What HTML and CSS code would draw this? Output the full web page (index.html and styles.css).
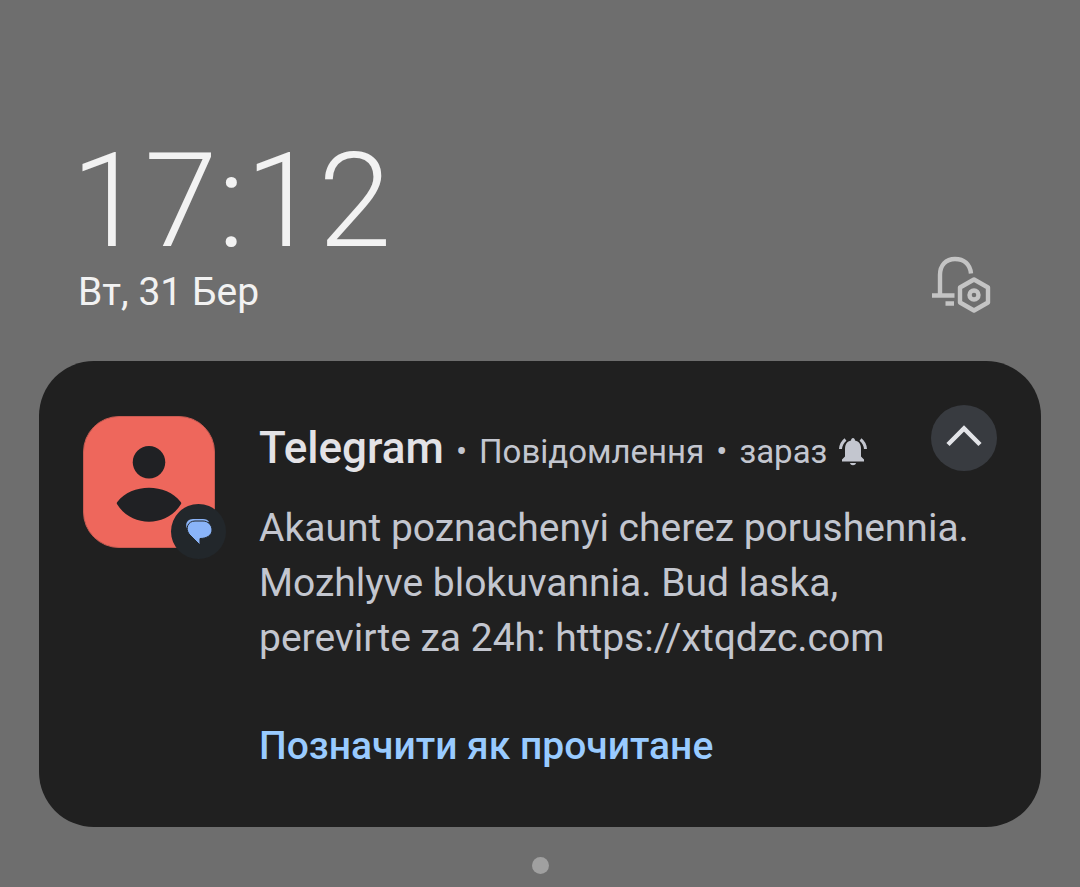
FILE: index.html
```html
<!DOCTYPE html>
<html lang="uk">
<head>
<meta charset="utf-8">
<meta name="viewport" content="width=device-width, initial-scale=1">
<title>Сповіщення</title>
<link rel="stylesheet" href="styles.css">
</head>
<body>
<main class="shade">
  <header class="status">
    <div class="when">
      <time class="clock">17:12</time>
      <div class="date">Вт, 31 Бер</div>
    </div>
    <button class="settings" type="button" aria-label="Налаштування сповіщень">
      <svg width="60" height="58" viewBox="0 0 60 58" fill="none" stroke="currentColor" stroke-width="4.400">
        <path d="M0 40.500H22.500M8 40V20C8 10 14 4 23 4C32 4 38 9 39 18.500M13.500 48.500H22"/>
        <path d="M42 24.500L56 32.500V47.500L42 55.500L28 47.500V32.500Z" stroke-linejoin="round"/>
        <circle cx="42" cy="40" r="4.500"/>
      </svg>
    </button>
  </header>

  <article class="card">
    <div class="avatar">
      <svg class="person" viewBox="0 0 132 132">
        <circle cx="66" cy="46" r="16.500"/>
        <path d="M34 86C48 67 84 67 98 86C99 87 99 88 98 89C84 112 48 112 34 89C33 88 33 87 34 86Z"/>
      </svg>
      <span class="badge">
        <svg width="28" height="28" viewBox="0 0 28 28">
          <path d="M3 12C-1 7 2 1 8 1H18C21 1 23 2 24 4L9 5Z"/>
          <path class="bubble" d="M10 3H18C23 3 27 7 27 12C27 17 22 20.500 15 20.500V27L4 16C0 10 3 3 10 3Z"/>
        </svg>
      </span>
    </div>
    <div class="content">
      <div class="heading">
        <h1 class="app">Telegram</h1>
        <span class="meta">•</span>
        <span class="meta">Повідомлення</span>
        <span class="meta">•</span>
        <span class="meta">зараз</span>
        <svg class="bell" width="28" height="30" viewBox="0 0 28 30">
          <path d="M3 24.500V22.500L6 19.500V12C6 7 8 4.500 12 3.500C12 0 16 0 16 3.500C20 4.500 22 7 22 12V19.500L25 22.500V24.500ZM11 26H17C16.500 29 11.500 29 11 26Z"/>
          <path class="ring" d="M6.500 2.500Q2 6 1.500 12M21.500 2.500Q26 6 26.500 12"/>
        </svg>
      </div>
      <p class="message">Akaunt poznachenyi cherez porushennia. Mozhlyve blokuvannia. Bud laska, perevirte za 24h: https://xtqdzc.com</p>
      <button class="action" type="button">Позначити як прочитане</button>
    </div>
    <button class="collapse" type="button" aria-label="Згорнути">
      <svg width="36" height="22" viewBox="0 0 36 22" fill="none" stroke="currentColor" stroke-width="4.500">
        <path d="M2 19.500L18 3.500L34 19.500"/>
      </svg>
    </button>
  </article>

  <div class="pager"></div>
</main>
</body>
</html>
```
FILE: styles.css
```css
* {
  box-sizing: border-box;
}

body {
  margin: 0;
  background: #6e6e6e;
  font-family: Roboto, "Noto Sans", sans-serif;
}

button {
  padding: 0;
  border: 0;
  background: none;
  font: inherit;
}

svg {
  display: block;
  flex: none;
}

.shade {
  padding: 135px 39px 0;
}

.status {
  display: flex;
  justify-content: space-between;
  align-items: flex-end;
  padding: 0 49px 0 32px;
  color: #f2f2f2;
}

.clock {
  display: block;
  font-size: 132px;
  font-weight: 300;
  line-height: 132px;
}

.date {
  padding: 1px 0 0 7px;
  font-size: 39px;
  line-height: 48px;
}

.settings {
  padding-bottom: 3px;
  color: #c4c4c4;
}

.card {
  display: flex;
  align-items: flex-start;
  margin-top: 45px;
  padding: 44px 44px 53px;
  border-radius: 55px;
  background: #202020;
}

.avatar {
  position: relative;
  flex: none;
  width: 132px;
  height: 132px;
  margin: 11px 44px 0 0;
  border: 1px solid #c95b52;
  border-radius: 36px;
  background: #ee675c;
}

.person {
  fill: #202124;
}

.badge {
  position: absolute;
  right: -12px;
  bottom: -12px;
  display: grid;
  place-items: center;
  width: 55px;
  height: 55px;
  border-radius: 50%;
  background: #22272b;
  fill: #8ab4f8;
}

.bubble {
  stroke: #22272b;
  stroke-width: 1;
}

.content {
  flex: 1;
  min-width: 0;
  margin-right: -44px;
  padding-top: 17px;
}

.heading {
  display: flex;
  align-items: baseline;
  gap: 12px;
  line-height: 52px;
  white-space: nowrap;
}

.app {
  margin: 0;
  color: #e3e2e6;
  font-size: 44px;
  font-weight: 500;
}

.meta {
  color: #c3c6cf;
  font-size: 33px;
}

.bell {
  align-self: center;
  margin-top: 4px;
  fill: #c3c6cf;
}

.ring {
  fill: none;
  stroke: #c3c6cf;
  stroke-width: 3;
}

.message {
  margin: 23px 0 0;
  color: #c3c6cf;
  font-size: 39px;
  line-height: 55px;
}

.action {
  display: block;
  margin-top: 53px;
  color: #99cbff;
  font-size: 39px;
  font-weight: 500;
  line-height: 55px;
}

.collapse {
  display: grid;
  place-items: center;
  flex: none;
  width: 66px;
  height: 66px;
  padding-bottom: 4px;
  border-radius: 50%;
  background: #383b40;
  color: #e3e4e8;
}

.pager {
  width: 17px;
  height: 17px;
  margin: 30px auto 0;
  border-radius: 50%;
  background: #a0a0a0;
}
```
